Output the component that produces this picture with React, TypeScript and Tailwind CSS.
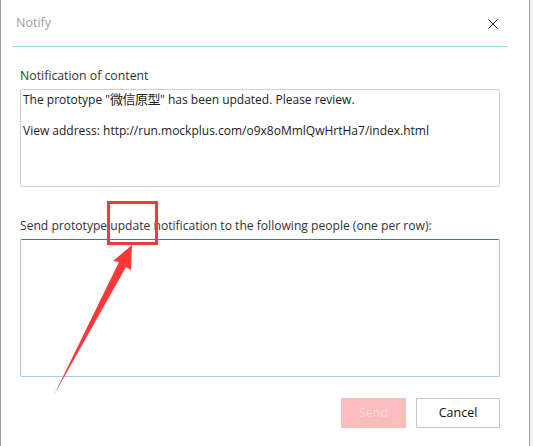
import React from "react";

export default function App() {
  const font = { fontFamily: '"Open Sans", "Noto Sans CJK SC", sans-serif' };
  return (
    <div className="relative w-[533px] h-[446px] bg-[#f3f3f3] flex overflow-hidden" style={font}>
      <div className="w-[530px] h-full bg-white border-l border-r border-[#9c9c9c] flex flex-col">
        <div className="h-[46px] flex items-center justify-between pl-[15px] pr-[31px]">
          <span className="text-[12.5px] text-[#a0a0a0] pt-[1px]">Notify</span>
          <svg width="10" height="10" viewBox="0 0 10 10" className="mt-[1px]">
            <path d="M0.5 0.5 L9.5 9.5 M9.5 0.5 L0.5 9.5" stroke="#222" strokeWidth="1" />
          </svg>
        </div>
        <div className="h-px bg-[#9fe0e8] ml-[11px] mr-[21px]" />
        <div className="pl-[19px] pr-[29px] flex flex-col">
          <div className="mt-[21px] text-[12.3px] leading-[16px] text-[#333]">Notification of content</div>
          <div className="mt-[5px] h-[98px] border border-[#cfcfcf] rounded-[2px] pl-[2px] pt-[2px] text-[12px] leading-[15.5px] text-[#222]">
            <div>
              The prototype "<span className="text-[13px] tracking-[-0.5px]">微信原型</span>" has been updated. Please review.
            </div>
            <div>&nbsp;</div>
            <div>View address: http://run.mockplus.com/o9x8oMmlQwHrtHa7/index.html</div>
          </div>
          <div className="mt-[31px] text-[12.1px] leading-[16px] text-[#333]">
            Send prototype update notification to the following people (one per row):
          </div>
          <div className="mt-[5px] h-[138px] border border-[#a9cce2] border-t-[#3f77a6] rounded-[2px]" />
          <div className="mt-[21px] flex justify-end gap-[10px]">
            <div className="w-[65px] h-[30px] bg-[#fbbcbc] flex items-center justify-center text-[12.5px] text-[#fdd9d9]">Send</div>
            <div className="w-[84px] h-[30px] border border-[#c8c8c8] flex items-center justify-center text-[12.5px] text-[#111]">Cancel</div>
          </div>
        </div>
      </div>
      <svg className="absolute left-0 top-0 pointer-events-none" width="533" height="446">
        <rect x="108.5" y="202.5" width="48" height="41" fill="none" stroke="#f23a3a" strokeWidth="3" />
        <polygon points="132,245 113,261 119,262 54,395 126,267 131,270" fill="#fa3838" />
      </svg>
    </div>
  );
}
